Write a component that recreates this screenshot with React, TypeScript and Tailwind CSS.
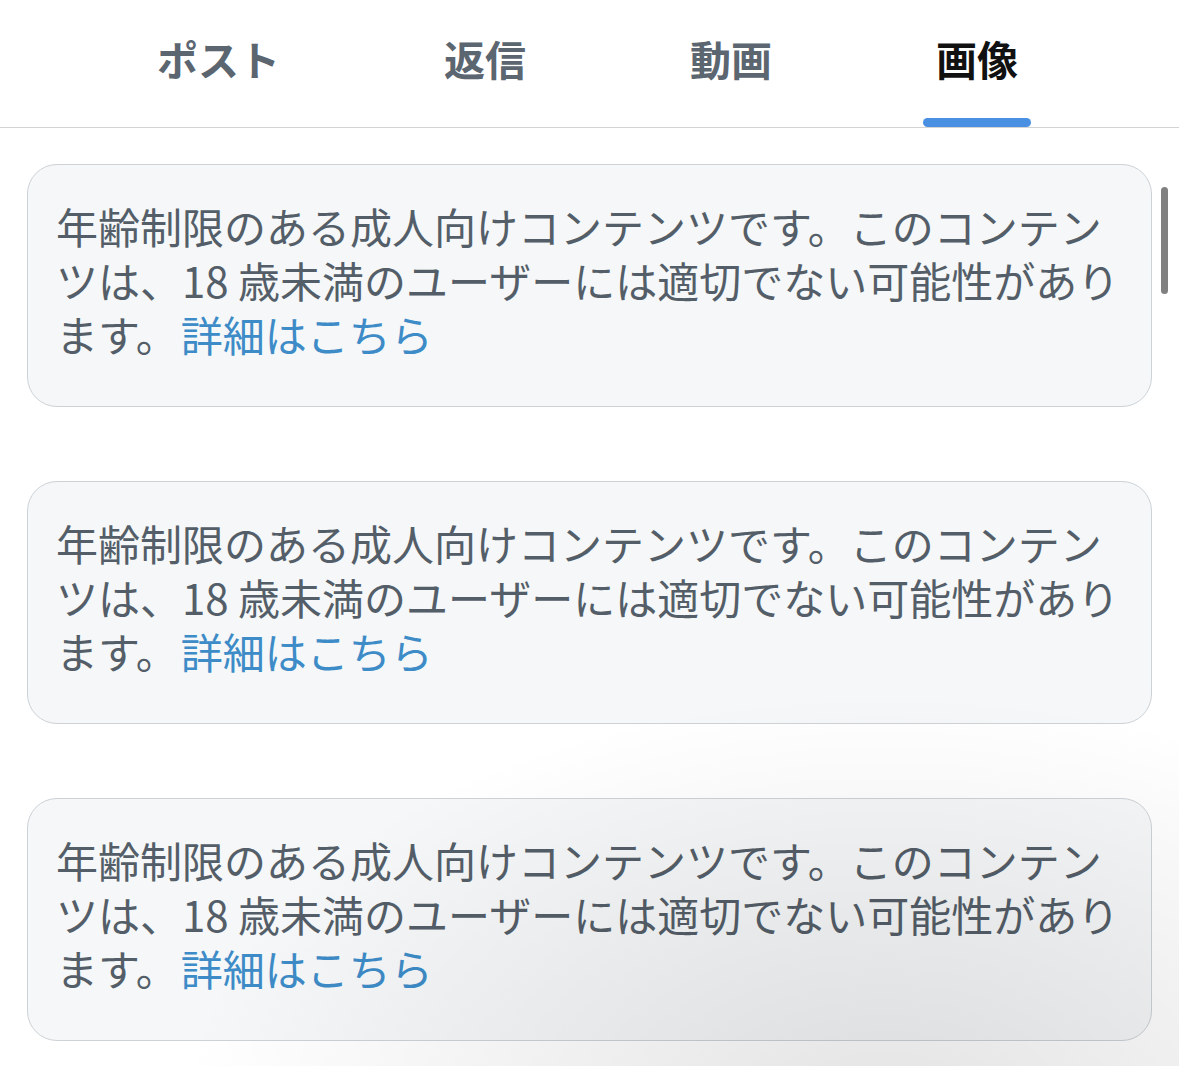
import React from "react";

const tabs = [
  { label: "ポスト", active: false },
  { label: "返信", active: false },
  { label: "動画", active: false },
  { label: "画像", active: true },
];

function WarningCard() {
  return (
    <div className="h-[243px] rounded-[30px] border border-[#cdd2d7] bg-[#f5f7f8] pl-[28px] pt-[34px]">
      <p className="text-[42px] leading-[54px] text-[#545e68] whitespace-nowrap">
        年齢制限のある成人向けコンテンツです。このコンテン
        <br />
        ツは、18 歳未満のユーザーには適切でない可能性があり
        <br />
        ます。<span className="ml-[3px] text-[#3d8bc7]">詳細はこちら</span>
      </p>
    </div>
  );
}

export default function App() {
  return (
    <div
      className="relative w-[1179px] h-[1066px] overflow-hidden bg-white"
      style={{ fontFamily: '"Noto Sans CJK JP", "Noto Sans", sans-serif' }}
    >
      {/* Tabs */}
      <div className="h-[128px] border-b border-[#d3d3d3]">
        <div className="flex h-full pl-[144px] gap-[138px]">
          {tabs.map((t) => (
            <div key={t.label} className="flex h-full flex-col items-center justify-between px-[13px]">
              <span
                className={
                  "mt-[33px] text-[41px] leading-[50px] font-bold " +
                  (t.active ? "text-[#111111]" : "text-[#5b6670]")
                }
              >
                {t.label}
              </span>
              <div
                className={
                  "-mx-[13px] h-[9px] self-stretch rounded-full " +
                  (t.active ? "bg-[#4a90e2]" : "bg-transparent")
                }
              />
            </div>
          ))}
        </div>
      </div>

      {/* Cards */}
      <div className="mx-[27px] mt-[36px] flex flex-col gap-[74px]">
        <WarningCard />
        <WarningCard />
        <WarningCard />
      </div>

      {/* scrollbar */}
      <div className="absolute left-[1161px] top-[187px] h-[107px] w-[7px] rounded-full bg-[#808080]" />

      {/* screen shading */}
      <div className="pointer-events-none absolute inset-0 bg-[radial-gradient(ellipse_60%_40%_at_75%_105%,rgba(0,0,0,0.11),rgba(0,0,0,0)_100%)]" />
    </div>
  );
}
